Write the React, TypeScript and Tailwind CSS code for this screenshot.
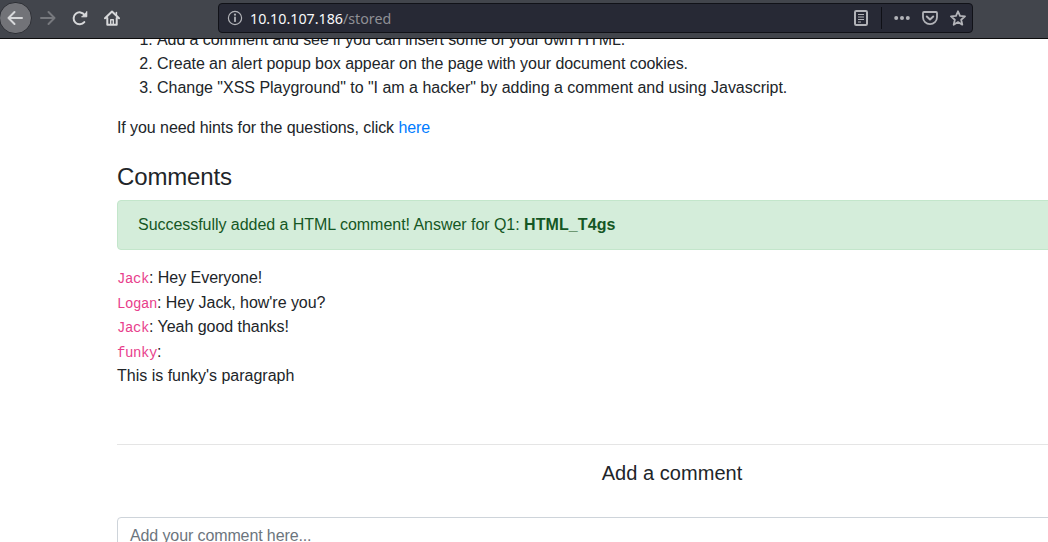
import type { ReactNode } from "react";

function Glyph({ className, children }: { className?: string; children: ReactNode }) {
  return (
    <svg
      viewBox="0 0 16 16"
      width="16"
      height="16"
      fill="none"
      stroke="currentColor"
      strokeWidth="2"
      strokeLinecap="round"
      strokeLinejoin="round"
      className={`block shrink-0 ${className ?? ""}`}
    >
      {children}
    </svg>
  );
}

function Toolbar() {
  return (
    <header className="flex h-[39px] shrink-0 items-start border-b border-[#0c0c0d] bg-[#42454c] text-[#d7d8da]">
      <div className="mt-[2px] -ml-px flex h-8 w-[33px] shrink-0 items-center justify-center rounded-full border border-[#2d2f35] bg-[#727378]">
        <Glyph className="-ml-px">
          <path d="M15 8H1.5M7.5 2 1.5 8l6 6" />
        </Glyph>
      </div>
      <div className="ml-2 flex h-9 items-center gap-4">
        <Glyph className="text-[#77797e]">
          <path d="M1 8h13.5M8.5 2l6 6-6 6" />
        </Glyph>
        <Glyph>
          <path d="M12.3 12.1A6 6 0 1 1 12.6 5" />
          <path d="M15 1.2v5.6H9.4z" fill="currentColor" stroke="none" />
          <path d="M14.8 1.6v5.2H9.8" strokeWidth="1" />
        </Glyph>
        <Glyph>
          <path d="M1 8.2 8 1.5l7 6.7M3.3 8v6.7h9.4V8" />
          <path d="M6.7 14V9.8h2.6V14" strokeWidth="1.4" />
          <path d="M12.4 2.5v3" strokeWidth="1.5" />
        </Glyph>
      </div>
      <div className="mt-[3px] ml-[98px] flex h-[30px] w-[755px] items-center rounded-[4px] border border-[#111218] bg-[#272935] text-[#b2b3b8]">
        <Glyph className="ml-2">
          <circle cx="8" cy="8" r="6.6" strokeWidth="1.2" />
          <path d="M8 7.5v3.7" strokeWidth="1.8" />
          <circle cx="8" cy="4.7" r="1.1" fill="currentColor" stroke="none" />
        </Glyph>
        <div className="mt-px ml-[7px] flex-1 font-['Noto_Sans',sans-serif] text-[14.25px] leading-5 text-[#8f9096]">
          <span className="text-[#f9f9fa]">10.10.107.186</span>/stored
        </div>
        <Glyph>
          <rect x="2" y="1" width="12" height="14" rx="1.2" />
          <path d="M5 4.5h6M5 7h6M5 9.5h6M5 12h3" strokeWidth="1" strokeLinecap="butt" />
        </Glyph>
        <div className="ml-3 h-[22px] w-px bg-[#0f1016]" />
        <Glyph className="ml-3">
          <g fill="currentColor" stroke="none">
            <circle cx="2.2" cy="8" r="2" />
            <circle cx="8" cy="8" r="2" />
            <circle cx="13.8" cy="8" r="2" />
          </g>
        </Glyph>
        <Glyph className="ml-3">
          <path d="M2 2h12a1 1 0 0 1 1 1v4.2a7 7 0 0 1-14 0V3a1 1 0 0 1 1-1z" strokeWidth="1.8" />
          <path d="M4.8 6.5 8 9.5l3.2-3" />
        </Glyph>
        <Glyph className="mr-[6px] ml-3">
          <path d="m8 1.3 2 4.6 5 .5-3.8 3.3 1.1 5L8 12.1l-4.3 2.6 1.1-5L1 6.4l5-.5z" strokeWidth="1.8" />
        </Glyph>
      </div>
    </header>
  );
}

function Comment({ author, children }: { author: string; children?: ReactNode }) {
  return (
    <div className="h-[24.5px] tracking-[-0.04px]">
      <code className="font-['Liberation_Mono',monospace] text-[14px] tracking-[-0.4px] text-[#e83e8c]">{author}</code>: {children}
    </div>
  );
}

export default function App() {
  return (
    <div className="flex h-[542px] w-full flex-col overflow-hidden bg-white">
      <Toolbar />
      <div className="min-h-0 flex-1 overflow-hidden">
        <main className="-mt-[11px] ml-[117px] w-[1110px] font-['Liberation_Sans',Arial,sans-serif] text-base leading-6 text-[#212529]">
          <ol className="mb-4 list-decimal pl-10">
            <li className="tracking-[-0.08px]">Add a comment and see if you can insert some of your own HTML.</li>
            <li className="tracking-[-0.05px]">Create an alert popup box appear on the page with your document cookies.</li>
            <li className="tracking-[-0.02px]">Change "XSS Playground" to "I am a hacker" by adding a comment and using Javascript.</li>
          </ol>
          <p className="tracking-[-0.075px]">
            If you need hints for the questions, click <a className="text-[#007bff]">here</a>
          </p>
          <h4 className="mt-[22px] mb-[9px] text-2xl leading-[29px] tracking-[-0.15px]">Comments</h4>
          <div className="mb-4 rounded-[4px] border border-[#c3e6cb] bg-[#d4edda] px-5 py-3 tracking-[-0.04px] text-[#155724]">
            Successfully added a HTML comment! Answer for Q1: <b className="font-bold tracking-[0.09px]">HTML_T4gs</b>
          </div>
          <Comment author="Jack">Hey Everyone!</Comment>
          <Comment author="Logan">Hey Jack, how're you?</Comment>
          <Comment author="Jack">Yeah good thanks!</Comment>
          <Comment author="funky" />
          <p>This is funky's paragraph</p>
          <hr className="mt-14 mb-4 border-t border-black/10" />
          <h5 className="text-center text-xl leading-6 tracking-[0.05px]">Add a comment</h5>
          <textarea
            className="mt-8 block h-24 w-full resize-none rounded-[4px] border border-[#ced4da] px-3 py-1.5 tracking-[-0.11px] placeholder:text-[#6c757d]"
            placeholder="Add your comment here..."
          />
        </main>
      </div>
    </div>
  );
}
